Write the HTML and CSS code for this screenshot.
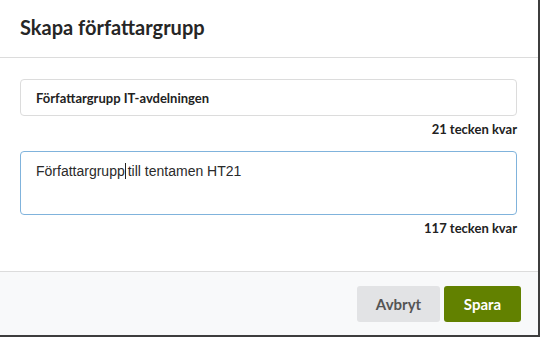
FILE: index.html
```html
<!DOCTYPE html>
<html lang="sv">
<head>
    <meta charset="UTF-8">
    <meta name="viewport" content="width=device-width, initial-scale=1.0">
    <title>Skapa författargrupp</title>
    <link rel="stylesheet" href="styles.css">
</head>
<body>

    <!-- Dialog -->
    <div class="dialog">
        <div class="dialog-header">
            <h2>Skapa författargrupp</h2>
        </div>

        <div class="dialog-body">
            <input type="text" class="field" value="Författargrupp IT-avdelningen">
            <p class="counter">21 tecken kvar</p>

            <div class="field field-area">Författargrupp<span class="caret"></span>till tentamen HT21</div>
            <p class="counter">117 tecken kvar</p>
        </div>

        <div class="dialog-footer">
            <button class="btn btn-cancel">Avbryt</button>
            <button class="btn btn-save">Spara</button>
        </div>
    </div>

</body>
</html>
```

FILE: styles.css
```css
/* General Styles */
body {
    font-family: Lato, "Noto Sans", sans-serif;
    margin: 0;
    padding: 0;
    background-color: #3d3d3d;
    color: #222;
}

/* Dialog */
.dialog {
    width: 538px;
    height: 335px;
    background: white;
    display: flex;
    flex-direction: column;
}

.dialog-header {
    height: 58px;
    box-sizing: border-box;
    border-bottom: 1px solid #dcdcdc;
    padding: 0 20px 3px;
    display: flex;
    align-items: center;
}

.dialog-header h2 {
    margin: 0;
    font-size: 20px;
    font-weight: 700;
    color: #262626;
}

.dialog-body {
    flex: 1;
    padding: 21px 21px 0 20px;
}

/* Fields */
.field {
    display: block;
    box-sizing: border-box;
    width: 100%;
    height: 37px;
    margin: 0;
    padding: 0 15px;
    border: 1px solid #dcdcdc;
    border-radius: 4px;
    font-family: Lato, "Noto Sans", sans-serif;
    font-size: 13px;
    font-weight: 700;
    color: #222;
    outline: none;
}

.field-area {
    height: 64px;
    padding: 11px 15px;
    border-color: #80b3dc;
    font-family: "Liberation Sans", Arial, sans-serif;
    font-size: 14px;
    font-weight: 400;
    line-height: 16px;
    color: #2a2a2a;
}

.caret {
    display: inline-block;
    width: 1px;
    height: 16px;
    background: #222;
    vertical-align: top;
    margin: 0 2px 0 0;
}

.counter {
    margin: 4px 0 0;
    height: 31px;
    text-align: right;
    font-size: 13px;
    font-weight: 700;
    line-height: 18px;
}

/* Footer */
.dialog-footer {
    height: 64px;
    box-sizing: border-box;
    border-top: 1px solid #dcdcdc;
    background: #f8f9fa;
    padding: 14px 17px 0 0;
    display: flex;
    justify-content: flex-end;
    align-items: flex-start;
    gap: 4px;
}

.btn {
    height: 36px;
    border: none;
    border-radius: 3px;
    font-family: Lato, "Noto Sans", sans-serif;
    font-size: 15px;
    font-weight: 700;
    cursor: pointer;
}

.btn-cancel {
    width: 83px;
    background-color: #e2e3e5;
    color: #555;
}

.btn-save {
    width: 77px;
    background-color: #628100;
    color: white;
}
```
